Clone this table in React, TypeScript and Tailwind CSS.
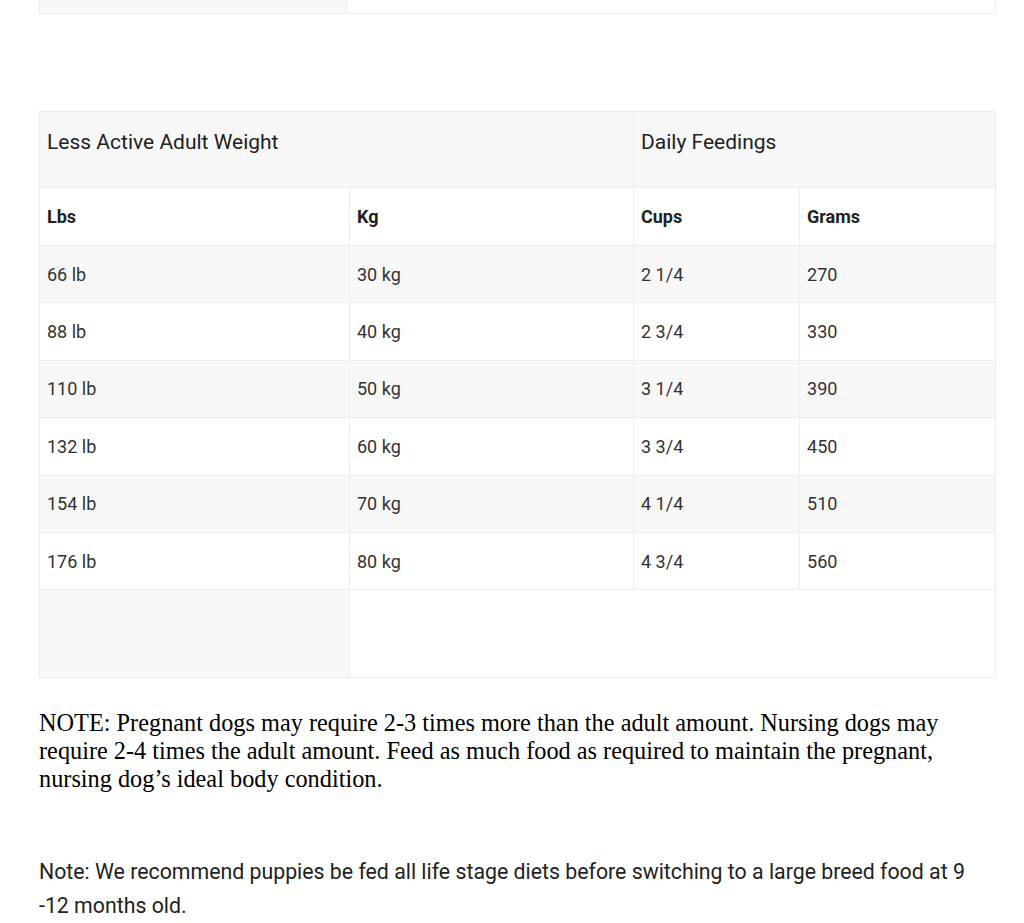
const rows = [
  ['66 lb', '30 kg', '2 1/4', '270'],
  ['88 lb', '40 kg', '2 3/4', '330'],
  ['110 lb', '50 kg', '3 1/4', '390'],
  ['132 lb', '60 kg', '3 3/4', '450'],
  ['154 lb', '70 kg', '4 1/4', '510'],
  ['176 lb', '80 kg', '4 3/4', '560'],
];

export default function App() {
  return (
    <div className="min-h-[923px] bg-white pl-[39px] pr-[28px] text-[#222] font-['Roboto','Liberation_Sans',sans-serif]">
      {/* tail of previous table */}
      <table className="-mt-px w-full table-fixed border-collapse">
        <tbody>
          <tr className="h-[14px]">
            <td className="w-[307px] border border-[#eeeeee] bg-[#f8f8f8]" />
            <td className="border border-[#eeeeee] bg-white" />
          </tr>
        </tbody>
      </table>

      <table className="mt-[97px] w-full table-fixed border-collapse text-[18px]">
        <colgroup>
          <col className="w-[310px]" />
          <col className="w-[284px]" />
          <col className="w-[166px]" />
          <col />
        </colgroup>
        <thead>
          <tr className="h-[76px] bg-[#f8f8f8]">
            <th colSpan={2} className="border border-[#eeeeee] px-[7px] pt-[15px] align-top text-left text-[21px] font-normal leading-[30px]">
              Less Active Adult Weight
            </th>
            <th colSpan={2} className="border border-[#eeeeee] px-[7px] pt-[15px] align-top text-left text-[21px] font-normal leading-[30px]">
              Daily Feedings
            </th>
          </tr>
          <tr className="h-[58px] bg-white">
            <th className="border border-[#eeeeee] px-[7px] text-left font-bold">Lbs</th>
            <th className="border border-[#eeeeee] px-[7px] text-left font-bold">Kg</th>
            <th className="border border-[#eeeeee] px-[7px] text-left font-bold">Cups</th>
            <th className="border border-[#eeeeee] px-[7px] text-left font-bold">Grams</th>
          </tr>
        </thead>
        <tbody>
          {rows.map((r, i) => (
            <tr key={r[0]} className={`h-[57.4px] ${i % 2 === 0 ? 'bg-[#f8f8f8]' : 'bg-white'}`}>
              {r.map((c, j) => (
                <td key={j} className="border border-[#eeeeee] px-[7px] text-[#333]">
                  {c}
                </td>
              ))}
            </tr>
          ))}
          <tr className="h-[88px]">
            <td className="border border-[#eeeeee] bg-[#f8f8f8]" />
            <td colSpan={3} className="border border-[#eeeeee] bg-white" />
          </tr>
        </tbody>
      </table>

      <p className="mt-[31px] text-[24.3px] leading-[28px] text-black font-['Liberation_Serif','Times_New_Roman',serif]">
        NOTE: Pregnant dogs may require 2-3 times more than the adult amount. Nursing dogs may require 2-4 times the adult amount. Feed as much food as required to maintain the pregnant, nursing dog’s ideal body condition.
      </p>

      <p className="mt-[62px] max-w-[940px] text-[21.3px] leading-[34px] text-[#222]">
        Note: We recommend puppies be fed all life stage diets before switching to a large breed food at 9 -12 months old.
      </p>
    </div>
  );
}
